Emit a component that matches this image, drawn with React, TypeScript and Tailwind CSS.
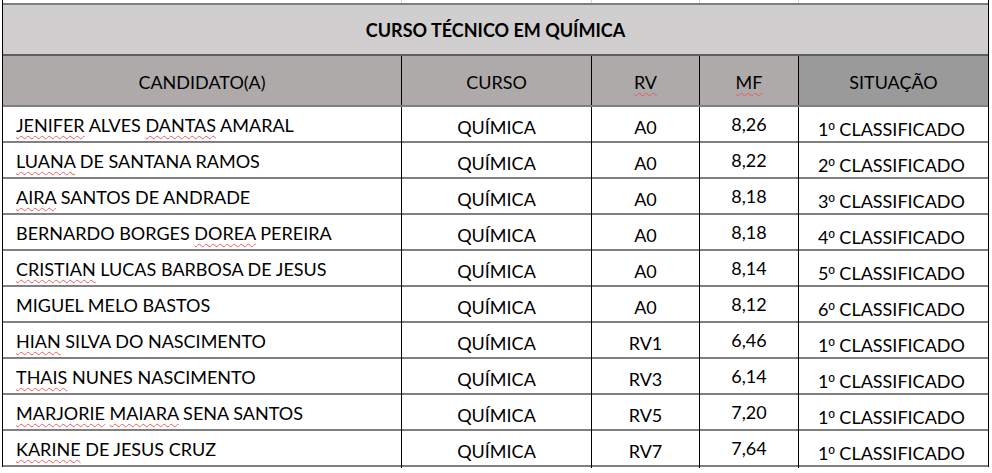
import React from "react";

type Row = { name: React.ReactNode; rv: string; mf: string; n: string };

const W = ({ children }: { children: React.ReactNode }) => (
  <span className="underline decoration-wavy decoration-[#e85c5c] decoration-[1px] underline-offset-[3px]">{children}</span>
);

const rows: Row[] = [
  { name: <><W>JENIFER</W> ALVES <W>DANTAS</W> AMARAL</>, rv: "A0", mf: "8,26", n: "1" },
  { name: <><W>LUANA</W> DE SANTANA RAMOS</>, rv: "A0", mf: "8,22", n: "2" },
  { name: <><W>AIRA</W> SANTOS DE ANDRADE</>, rv: "A0", mf: "8,18", n: "3" },
  { name: <>BERNARDO BORGES <W>DOREA</W> PEREIRA</>, rv: "A0", mf: "8,18", n: "4" },
  { name: <><W>CRISTIAN</W> LUCAS BARBOSA DE JESUS</>, rv: "A0", mf: "8,14", n: "5" },
  { name: <>MIGUEL MELO BASTOS</>, rv: "A0", mf: "8,12", n: "6" },
  { name: <><W>HIAN</W> SILVA DO NASCIMENTO</>, rv: "RV1", mf: "6,46", n: "1" },
  { name: <><W>THAIS</W> NUNES NASCIMENTO</>, rv: "RV3", mf: "6,14", n: "1" },
  { name: <><W>MARJORIE</W> <W>MAIARA</W> SENA SANTOS</>, rv: "RV5", mf: "7,20", n: "1" },
  { name: <><W>KARINE</W> DE JESUS CRUZ</>, rv: "RV7", mf: "7,64", n: "1" },
];

const cols = "grid grid-cols-[399px_190px_108px_99px_189px]";

export default function App() {
  return (
    <div
      className="w-[992px] h-[473px] bg-white overflow-hidden text-black"
      style={{ fontFamily: "Lato, 'Open Sans', sans-serif" }}
    >
      <div className="ml-[2px] w-[987px] border-l border-r border-black">
        {/* gridline strip above table */}
        <div className={`${cols} h-[3px]`}>
          <div className="border-r border-[#d4d4d4]" />
          <div className="border-r border-[#d4d4d4]" />
          <div className="border-r border-[#d4d4d4]" />
          <div className="border-r border-[#d4d4d4]" />
          <div />
        </div>
        {/* title */}
        <div className="h-[53px] bg-[#d0cece] border-t-2 border-b-2 border-t-[#7f7f7f] border-b-[#5e5e5e] flex items-center justify-center text-[18px] font-bold pt-[2px]">
          <span>CURSO TÉCNICO EM QUÍMICA</span>
        </div>
        {/* header */}
        <div className={`${cols} h-[51px] border-b-2 border-[#7f7f7f] text-[18px]`}>
          <div className="bg-[#aeaaaa] border-r border-black flex items-center justify-center pt-[3px]"><span>CANDIDATO(A)</span></div>
          <div className="bg-[#aeaaaa] border-r border-black flex items-center justify-center pt-[3px]"><span>CURSO</span></div>
          <div className="bg-[#aeaaaa] border-r border-black flex items-center justify-center pt-[3px]"><W>RV</W></div>
          <div className="bg-[#aeaaaa] border-r border-black flex items-center justify-center pt-[3px]"><W>MF</W></div>
          <div className="bg-[#9a9a9a] flex items-center justify-center pt-[3px]"><span>SITUAÇÃO</span></div>
        </div>
        {rows.map((r, i) => (
          <div key={i} className={`${cols} h-[36px] border-b-2 border-[#808080] text-[18px]`}>
            <div className="border-r border-black flex items-center pl-[13px] pt-[1px]"><span>{r.name}</span></div>
            <div className="border-r border-black flex items-center justify-center pt-[4px]"><span>QUÍMICA</span></div>
            <div className="border-r border-black flex items-center justify-center pt-[4px]"><span>{r.rv}</span></div>
            <div className="border-r border-black flex items-center justify-center pb-[2px]"><span>{r.mf}</span></div>
            <div className="flex items-center justify-center pt-[9px] pr-[4px]">
              <span>
                {r.n}
                <span style={{ fontFamily: "'Liberation Sans', sans-serif" }} className="text-[17px]">º</span>
                {" "}CLASSIFICADO
              </span>
            </div>
          </div>
        ))}
      </div>
    </div>
  );
}
